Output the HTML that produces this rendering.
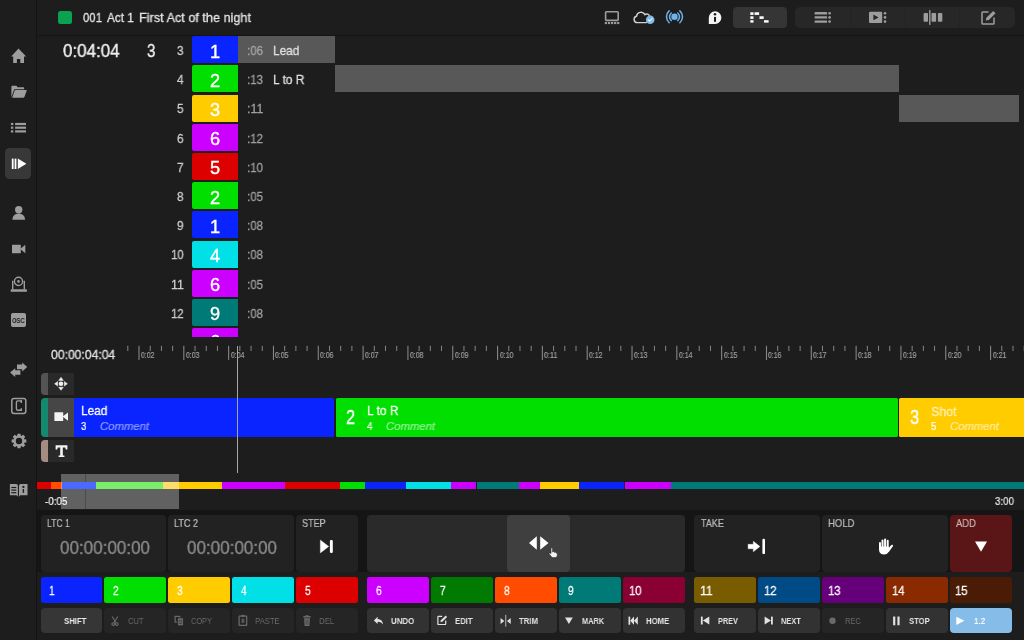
<!DOCTYPE html>
<html><head><meta charset="utf-8"><style>
html,body{margin:0;padding:0;}
body{width:1024px;height:640px;overflow:hidden;background:#1d1d1d;position:relative;font-family:"Liberation Sans",sans-serif;}
body div, body svg{position:absolute;}
body div div, body div svg{position:absolute;}
.t{white-space:nowrap;will-change:transform;}
svg{overflow:visible}
</style></head><body>
<div style="left:36.00px;top:0.00px;width:1.00px;height:640.00px;background:#141414;"></div>
<div style="left:37.00px;top:35.00px;width:987.00px;height:1.00px;background:#141414;"></div>
<div style="left:58.00px;top:11.00px;width:13.50px;height:12.50px;background:#0aa250;border-radius:2.5px;"></div>
<div class="t" style="left:82.70px;top:10px;font-size:13.23px;line-height:15px;color:#e6e6e6;-webkit-text-stroke:0.28px #e6e6e6;transform:scaleX(0.8612);transform-origin:0 0;">001</div>
<div class="t" style="left:107.10px;top:10px;font-size:13.23px;line-height:15px;color:#e6e6e6;-webkit-text-stroke:0.28px #e6e6e6;transform:scaleX(0.8891);transform-origin:0 0;">Act 1</div>
<div class="t" style="left:139.30px;top:10px;font-size:13.23px;line-height:15px;color:#e6e6e6;-webkit-text-stroke:0.28px #e6e6e6;transform:scaleX(0.9582);transform-origin:0 0;">First Act of the night</div>
<svg style="left:603.00px;top:9.00px;width:18.00px;height:17.00px" viewBox="0 0 18 17"><rect x="2.6" y="2.8" width="12.6" height="8.6" rx="0.8" fill="none" stroke="#9d9d9d" stroke-width="1.6"/><g fill="#9d9d9d"><rect x="1.8" y="13" width="2.2" height="2.1"/><rect x="4.9" y="13" width="2.2" height="2.1"/><rect x="8" y="13" width="2.2" height="2.1"/><rect x="11.1" y="13" width="2.2" height="2.1"/><rect x="14.1" y="13" width="2.2" height="2.1"/></g></svg>
<svg style="left:632.00px;top:9.00px;width:24.00px;height:17.00px" viewBox="0 0 24 17"><path d="M14.5 13.6 H5.4 A3.2 3.2 0 0 1 4.5 7.3 A4.5 4.5 0 0 1 12.9 5.6 A2.9 2.9 0 0 1 17.6 7.6" fill="none" stroke="#d2d2d2" stroke-width="1.4" stroke-linecap="round"/><circle cx="18.2" cy="10.7" r="4.3" fill="#7fbaea"/><path d="M16.3 10.9 L17.6 12.2 L20.1 9.5" fill="none" stroke="#f4f8fc" stroke-width="1.1" stroke-linecap="round" stroke-linejoin="round"/></svg>
<svg style="left:664.00px;top:8.00px;width:21.00px;height:18.00px" viewBox="0 0 21 18"><circle cx="10.5" cy="8.8" r="3.2" fill="#6fb3e8"/><path d="M7.29 4.97 A5 5 0 0 0 7.29 12.63 M13.71 4.97 A5 5 0 0 1 13.71 12.63 M5.15 2.85 A8 8 0 0 0 5.15 14.75 M15.85 2.85 A8 8 0 0 1 15.85 14.75" fill="none" stroke="#6fb3e8" stroke-width="1.5" stroke-linecap="round"/></svg>
<svg style="left:707.00px;top:10.00px;width:16.00px;height:16.00px" viewBox="0 0 16 16"><path d="M1.8 13.9 V7.6 A6.3 6.3 0 1 1 8.1 13.9 Z" fill="#f4f4f4"/><circle cx="8.0" cy="4.3" r="1.25" fill="#1d1d1d"/><rect x="7.0" y="6.9" width="2.05" height="4.9" fill="#1d1d1d"/></svg>
<div style="left:732.70px;top:6.90px;width:53.90px;height:20.90px;background:#353535;border-radius:4px;"></div>
<svg style="left:749.00px;top:11.00px;width:21.00px;height:13.00px" viewBox="0 0 21 13"><g fill="#fff"><rect x="1.3" y="1.3" width="3.2" height="2.6"/><rect x="1.3" y="5.3" width="3.2" height="2.6"/><rect x="1.3" y="9.2" width="3.2" height="2.4"/><rect x="5.5" y="1.3" width="4.6" height="2.6"/><rect x="10.5" y="5.3" width="4.2" height="2.6"/><rect x="15" y="9.2" width="4.6" height="2.4"/></g></svg>
<div style="left:795.00px;top:6.70px;width:220.00px;height:21.20px;background:#272727;border-radius:5px;"></div>
<div style="left:850.10px;top:6.70px;width:1.00px;height:21.20px;background:#232323;"></div>
<div style="left:904.90px;top:6.70px;width:1.00px;height:21.20px;background:#232323;"></div>
<div style="left:958.60px;top:6.70px;width:1.00px;height:21.20px;background:#232323;"></div>
<svg style="left:813.00px;top:10.00px;width:20.00px;height:15.00px" viewBox="0 0 20 15"><g fill="#9d9d9d"><rect x="1.6" y="2.1" width="12.5" height="2.4" rx="0.6"/><rect x="1.6" y="6.2" width="12.5" height="2.4" rx="0.6"/><rect x="1.6" y="10.4" width="12.5" height="2.4" rx="0.6"/><circle cx="16.6" cy="3.3" r="1.3"/><circle cx="16.6" cy="7.4" r="1.3"/><circle cx="16.6" cy="11.6" r="1.3"/></g></svg>
<svg style="left:868.00px;top:10.00px;width:20.00px;height:15.00px" viewBox="0 0 20 15"><rect x="1" y="1.8" width="13.2" height="11.2" rx="1.2" fill="#9d9d9d"/><path d="M5.4 4.6 L10.6 7.4 L5.4 10.2 Z" fill="#272727"/><g fill="#9d9d9d"><circle cx="17" cy="3.3" r="1.3"/><circle cx="17" cy="7.4" r="1.3"/><circle cx="17" cy="11.6" r="1.3"/></g></svg>
<svg style="left:922.00px;top:9.00px;width:22.00px;height:17.00px" viewBox="0 0 22 17"><g fill="#9d9d9d"><rect x="1.6" y="4.1" width="4.4" height="8.7" rx="0.8"/><rect x="9.5" y="4.1" width="4.6" height="8.7" rx="0.8"/><rect x="15.9" y="4.1" width="4.4" height="8.7" rx="0.8"/><rect x="7.1" y="1.1" width="1.4" height="14.8"/></g></svg>
<svg style="left:980.00px;top:9.00px;width:17.00px;height:17.00px" viewBox="0 0 17 17"><path d="M8.5 2.9 H2.8 Q2 2.9 2 3.7 V14.2 Q2 15 2.8 15 H13.2 Q14 15 14 14.2 V8.6" fill="none" stroke="#9d9d9d" stroke-width="1.5"/><path d="M5.8 11.6 L6.4 8.7 L13.2 1.9 L15.6 4.3 L8.8 11.1 Z" fill="#9d9d9d"/></svg>
<svg style="left:10.00px;top:47.00px;width:18.00px;height:18.00px" viewBox="0 0 18 18"><path d="M8.5 1.6 L16.2 9.4 L14 9.4 L14 16 L10.3 16 L10.3 12 L6.9 12 L6.9 16 L3.2 16 L3.2 9.4 L1.2 9.4 Z" fill="#9d9d9d"/></svg>
<svg style="left:10.00px;top:84.00px;width:18.00px;height:15.00px" viewBox="0 0 18 15"><path d="M1.4 13.6 V2.6 Q1.4 1.8 2.2 1.8 H6.4 L7.6 3.2 H13.4 Q14.2 3.2 14.2 4 V5.2 H5 Q4.2 5.2 3.9 6 Z" fill="#9d9d9d"/><path d="M2.2 13.8 L4.6 6.6 Q4.9 5.9 5.7 5.9 H16.2 Q17 5.9 16.7 6.7 L14.4 13.1 Q14.1 13.8 13.3 13.8 Z" fill="#9d9d9d"/></svg>
<svg style="left:9.00px;top:121.00px;width:19.00px;height:13.00px" viewBox="0 0 19 13"><g fill="#9d9d9d"><rect x="1.9" y="1.9" width="2.4" height="2.2"/><rect x="1.9" y="5.6" width="2.4" height="2.2"/><rect x="1.9" y="9.3" width="2.4" height="2.2"/><rect x="6.1" y="1.9" width="10.9" height="2.2"/><rect x="6.1" y="5.6" width="10.9" height="2.2"/><rect x="6.1" y="9.3" width="10.9" height="2.2"/></g></svg>
<div style="left:4.90px;top:148.00px;width:26.60px;height:31.40px;background:#383838;border-radius:4.5px;"></div>
<svg style="left:10.00px;top:157.00px;width:18.00px;height:14.00px" viewBox="0 0 18 14"><g fill="#fff"><rect x="1.8" y="1.6" width="1.8" height="10.4"/><rect x="4.6" y="1.6" width="1.8" height="10.4"/><path d="M7.8 1.6 L16.4 6.8 L7.8 12 Z"/></g></svg>
<svg style="left:11.00px;top:204.00px;width:16.00px;height:17.00px" viewBox="0 0 16 17"><circle cx="7.7" cy="5.8" r="3.7" fill="#9d9d9d"/><path d="M1.4 15.7 Q1.6 9.8 7.7 9.6 Q13.8 9.8 14.1 15.7 Z" fill="#9d9d9d"/></svg>
<svg style="left:11.00px;top:243.00px;width:16.00px;height:12.00px" viewBox="0 0 16 12"><rect x="1" y="1.8" width="8.8" height="8.4" rx="0.5" fill="#9d9d9d"/><path d="M9.2 5.9 L14.3 1.8 V10.2 Z" fill="#9d9d9d"/></svg>
<svg style="left:10.00px;top:275.00px;width:18.00px;height:18.00px" viewBox="0 0 18 18"><circle cx="8.5" cy="6.4" r="4.1" fill="none" stroke="#9d9d9d" stroke-width="1.4"/><circle cx="8.5" cy="6.4" r="1.3" fill="#9d9d9d"/><path d="M2.7 14.3 V5.8 M14.3 14.3 V5.8" stroke="#9d9d9d" stroke-width="1.4"/><rect x="0.7" y="14.3" width="16.2" height="2.5" rx="0.6" fill="#9d9d9d"/></svg>
<div style="left:11.40px;top:313.10px;width:14.50px;height:14.30px;background:#9d9d9d;border-radius:2px;"></div>
<div class="t" style="left:11.95px;top:316px;font-size:7.56px;line-height:9px;color:#1d1d1d;font-weight:700;transform:scaleX(0.7693);transform-origin:0 0;">OSC</div>
<svg style="left:9.00px;top:361.00px;width:20.00px;height:17.00px" viewBox="0 0 20 17"><g fill="#9d9d9d"><path d="M8 3.6 H13.2 V1.6 L18.2 6 L13.2 10.4 V8.2 H8 Z"/><path d="M11.4 9.2 H6.2 V7.2 L1.1 11.6 L6.2 16 V13.8 H11.4 Z"/></g></svg>
<svg style="left:10.00px;top:396.00px;width:18.00px;height:19.00px" viewBox="0 0 18 19"><rect x="1.8" y="2.4" width="14" height="15" rx="2.2" fill="none" stroke="#9d9d9d" stroke-width="1.5"/><path d="M11.3 5.9 V4.9 H7.9 Q6.4 4.9 6.4 6.5 V12.7 Q6.4 14.3 7.9 14.3 H11.3 V13.3" fill="none" stroke="#9d9d9d" stroke-width="1.4"/><path d="M11.3 4.3 V6.9 M11.3 12.3 V14.9" stroke="#9d9d9d" stroke-width="1.5"/></svg>
<svg style="left:9.50px;top:432.25px;width:18.00px;height:18.00px" viewBox="0 0 18 18"><path d="M16.35 7.51 L16.35 10.49 L14.19 10.83 L13.96 11.37 L15.25 13.14 L13.14 15.25 L11.37 13.96 L10.83 14.19 L10.49 16.35 L7.51 16.35 L7.17 14.19 L6.63 13.96 L4.86 15.25 L2.75 13.14 L4.04 11.37 L3.81 10.83 L1.65 10.49 L1.65 7.51 L3.81 7.17 L4.04 6.63 L2.75 4.86 L4.86 2.75 L6.63 4.04 L7.17 3.81 L7.51 1.65 L10.49 1.65 L10.83 3.81 L11.37 4.04 L13.14 2.75 L15.25 4.86 L13.96 6.63 L14.19 7.17 Z M 5.80 9.00 a3.2 3.2 0 1 0 6.4 0 a3.2 3.2 0 1 0 -6.4 0 Z" fill="#9d9d9d" fill-rule="evenodd"/></svg>
<svg style="left:9.00px;top:483.00px;width:20.00px;height:16.00px" viewBox="0 0 20 16"><path d="M0.9 1 H7.1 Q8.9 1 8.9 2.8 V13.8 L7.6 12.3 H0.9 Z" fill="#9d9d9d"/><path d="M10 2.8 Q10 1 11.8 1 H18.5 V12.3 H11.3 L10 13.8 Z" fill="#9d9d9d"/><g fill="#1d1d1d"><rect x="2.3" y="3.9" width="5" height="1.2"/><rect x="2.3" y="6.5" width="5" height="1.2"/><rect x="2.3" y="9.1" width="5" height="1.2"/><circle cx="14.4" cy="3.9" r="1.15"/><rect x="13.7" y="6" width="1.4" height="3.8"/></g></svg>
<div class="t" style="left:63.40px;top:40px;font-size:18.90px;line-height:21px;color:#f0f0f0;-webkit-text-stroke:0.40px #f0f0f0;transform:scaleX(0.8979);transform-origin:0 0;">0:04:04</div>
<div class="t" style="left:147.20px;top:40px;font-size:18.90px;line-height:21px;color:#f0f0f0;-webkit-text-stroke:0.40px #f0f0f0;transform:scaleX(0.7996);transform-origin:0 0;">3</div>
<div style="left:37px;top:36px;width:987px;height:301.4px;overflow:hidden">
<div style="left:155.40px;top:0.25px;width:45.70px;height:27.00px;background:#0a24ff;border-radius:2px 0 0 2px;"></div>
<div style="left:201.10px;top:0.25px;width:97.00px;height:27.00px;background:#585858;"></div>
<div class="t" style="left:140.10px;top:8px;font-size:12.35px;line-height:14px;color:#cfcfcf;-webkit-text-stroke:0.26px #cfcfcf;transform:scaleX(0.9463);transform-origin:0 0;">3</div>
<div class="t" style="left:172.95px;top:6px;font-size:18.17px;line-height:20px;color:#ffffff;-webkit-text-stroke:0.38px #ffffff;">1</div>
<div class="t" style="left:209.90px;top:8px;font-size:12.35px;line-height:14px;color:#a6a6a6;-webkit-text-stroke:0.26px #a6a6a6;transform:scaleX(0.9317);transform-origin:0 0;">:06</div>
<div class="t" style="left:236.20px;top:7px;font-size:13.37px;line-height:15px;color:#e2e2e2;-webkit-text-stroke:0.28px #e2e2e2;transform:scaleX(0.8873);transform-origin:0 0;">Lead</div>
<div style="left:155.40px;top:29.45px;width:45.70px;height:27.00px;background:#00df00;border-radius:2px 0 0 2px;"></div>
<div style="left:298.10px;top:29.45px;width:563.60px;height:27.00px;background:#585858;"></div>
<div class="t" style="left:140.10px;top:37px;font-size:12.35px;line-height:14px;color:#cfcfcf;-webkit-text-stroke:0.26px #cfcfcf;transform:scaleX(0.9463);transform-origin:0 0;">4</div>
<div class="t" style="left:172.95px;top:35px;font-size:18.17px;line-height:20px;color:#ffffff;-webkit-text-stroke:0.38px #ffffff;">2</div>
<div class="t" style="left:209.90px;top:37px;font-size:12.35px;line-height:14px;color:#a0a0a0;-webkit-text-stroke:0.26px #a0a0a0;transform:scaleX(0.9317);transform-origin:0 0;">:13</div>
<div class="t" style="left:236.20px;top:36px;font-size:13.37px;line-height:15px;color:#e2e2e2;-webkit-text-stroke:0.28px #e2e2e2;transform:scaleX(0.8953);transform-origin:0 0;">L to R</div>
<div style="left:155.40px;top:58.65px;width:45.70px;height:27.00px;background:#ffcc00;border-radius:2px 0 0 2px;"></div>
<div style="left:861.70px;top:58.65px;width:120.50px;height:27.00px;background:#585858;"></div>
<div class="t" style="left:140.10px;top:66px;font-size:12.35px;line-height:14px;color:#cfcfcf;-webkit-text-stroke:0.26px #cfcfcf;transform:scaleX(0.9463);transform-origin:0 0;">5</div>
<div class="t" style="left:172.95px;top:64px;font-size:18.17px;line-height:20px;color:#ffffff;-webkit-text-stroke:0.38px #ffffff;">3</div>
<div class="t" style="left:209.90px;top:66px;font-size:12.35px;line-height:14px;color:#a0a0a0;-webkit-text-stroke:0.26px #a0a0a0;transform:scaleX(0.9841);transform-origin:0 0;">:11</div>
<div style="left:155.40px;top:87.85px;width:45.70px;height:27.00px;background:#cc00ff;border-radius:2px 0 0 2px;"></div>
<div class="t" style="left:140.10px;top:96px;font-size:12.35px;line-height:14px;color:#cfcfcf;-webkit-text-stroke:0.26px #cfcfcf;transform:scaleX(0.9463);transform-origin:0 0;">6</div>
<div class="t" style="left:172.95px;top:93px;font-size:18.17px;line-height:20px;color:#ffffff;-webkit-text-stroke:0.38px #ffffff;">6</div>
<div class="t" style="left:209.90px;top:96px;font-size:12.35px;line-height:14px;color:#a0a0a0;-webkit-text-stroke:0.26px #a0a0a0;transform:scaleX(0.9317);transform-origin:0 0;">:12</div>
<div style="left:155.40px;top:117.05px;width:45.70px;height:27.00px;background:#dc0000;border-radius:2px 0 0 2px;"></div>
<div class="t" style="left:140.10px;top:125px;font-size:12.35px;line-height:14px;color:#cfcfcf;-webkit-text-stroke:0.26px #cfcfcf;transform:scaleX(0.9463);transform-origin:0 0;">7</div>
<div class="t" style="left:172.95px;top:122px;font-size:18.17px;line-height:20px;color:#ffffff;-webkit-text-stroke:0.38px #ffffff;">5</div>
<div class="t" style="left:209.90px;top:125px;font-size:12.35px;line-height:14px;color:#a0a0a0;-webkit-text-stroke:0.26px #a0a0a0;transform:scaleX(0.9317);transform-origin:0 0;">:10</div>
<div style="left:155.40px;top:146.25px;width:45.70px;height:27.00px;background:#00df00;border-radius:2px 0 0 2px;"></div>
<div class="t" style="left:140.10px;top:154px;font-size:12.35px;line-height:14px;color:#cfcfcf;-webkit-text-stroke:0.26px #cfcfcf;transform:scaleX(0.9463);transform-origin:0 0;">8</div>
<div class="t" style="left:172.95px;top:152px;font-size:18.17px;line-height:20px;color:#ffffff;-webkit-text-stroke:0.38px #ffffff;">2</div>
<div class="t" style="left:209.90px;top:154px;font-size:12.35px;line-height:14px;color:#a0a0a0;-webkit-text-stroke:0.26px #a0a0a0;transform:scaleX(0.9317);transform-origin:0 0;">:05</div>
<div style="left:155.40px;top:175.45px;width:45.70px;height:27.00px;background:#0a24ff;border-radius:2px 0 0 2px;"></div>
<div class="t" style="left:140.10px;top:183px;font-size:12.35px;line-height:14px;color:#cfcfcf;-webkit-text-stroke:0.26px #cfcfcf;transform:scaleX(0.9463);transform-origin:0 0;">9</div>
<div class="t" style="left:172.95px;top:181px;font-size:18.17px;line-height:20px;color:#ffffff;-webkit-text-stroke:0.38px #ffffff;">1</div>
<div class="t" style="left:209.90px;top:183px;font-size:12.35px;line-height:14px;color:#a0a0a0;-webkit-text-stroke:0.26px #a0a0a0;transform:scaleX(0.9317);transform-origin:0 0;">:08</div>
<div style="left:155.40px;top:204.65px;width:45.70px;height:27.00px;background:#00e0e6;border-radius:2px 0 0 2px;"></div>
<div class="t" style="left:133.80px;top:212px;font-size:12.35px;line-height:14px;color:#cfcfcf;-webkit-text-stroke:0.26px #cfcfcf;transform:scaleX(0.9317);transform-origin:0 0;">10</div>
<div class="t" style="left:172.95px;top:210px;font-size:18.17px;line-height:20px;color:#ffffff;-webkit-text-stroke:0.38px #ffffff;">4</div>
<div class="t" style="left:209.90px;top:212px;font-size:12.35px;line-height:14px;color:#a0a0a0;-webkit-text-stroke:0.26px #a0a0a0;transform:scaleX(0.9317);transform-origin:0 0;">:08</div>
<div style="left:155.40px;top:233.85px;width:45.70px;height:27.00px;background:#cc00ff;border-radius:2px 0 0 2px;"></div>
<div class="t" style="left:133.80px;top:242px;font-size:12.35px;line-height:14px;color:#cfcfcf;-webkit-text-stroke:0.26px #cfcfcf;">11</div>
<div class="t" style="left:172.95px;top:239px;font-size:18.17px;line-height:20px;color:#ffffff;-webkit-text-stroke:0.38px #ffffff;">6</div>
<div class="t" style="left:209.90px;top:242px;font-size:12.35px;line-height:14px;color:#a0a0a0;-webkit-text-stroke:0.26px #a0a0a0;transform:scaleX(0.9317);transform-origin:0 0;">:05</div>
<div style="left:155.40px;top:263.05px;width:45.70px;height:27.00px;background:#007a76;border-radius:2px 0 0 2px;"></div>
<div class="t" style="left:133.80px;top:271px;font-size:12.35px;line-height:14px;color:#cfcfcf;-webkit-text-stroke:0.26px #cfcfcf;transform:scaleX(0.9317);transform-origin:0 0;">12</div>
<div class="t" style="left:172.95px;top:268px;font-size:18.17px;line-height:20px;color:#ffffff;-webkit-text-stroke:0.38px #ffffff;">9</div>
<div class="t" style="left:209.90px;top:271px;font-size:12.35px;line-height:14px;color:#a0a0a0;-webkit-text-stroke:0.26px #a0a0a0;transform:scaleX(0.9317);transform-origin:0 0;">:08</div>
<div style="left:155.40px;top:292.25px;width:45.70px;height:27.00px;background:#cc00ff;border-radius:2px 0 0 2px;"></div>
<div class="t" style="left:133.80px;top:300px;font-size:12.35px;line-height:14px;color:#cfcfcf;-webkit-text-stroke:0.26px #cfcfcf;transform:scaleX(0.9317);transform-origin:0 0;">13</div>
<div class="t" style="left:172.95px;top:296px;font-size:18.17px;line-height:20px;color:#ffffff;-webkit-text-stroke:0.38px #ffffff;">6</div>
<div class="t" style="left:209.90px;top:300px;font-size:12.35px;line-height:14px;color:#a0a0a0;-webkit-text-stroke:0.26px #a0a0a0;transform:scaleX(0.9317);transform-origin:0 0;">:08</div>
</div>
<div class="t" style="left:50.90px;top:348px;font-size:12.50px;line-height:14px;color:#e6e6e6;-webkit-text-stroke:0.26px #e6e6e6;transform:scaleX(0.9722);transform-origin:0 0;">00:00:04:04</div>
<div class="t" style="left:141.00px;top:351px;font-size:8.14px;line-height:9px;color:#a2a2a2;-webkit-text-stroke:0.18px #a2a2a2;transform:scaleX(0.8460);transform-origin:0 0;">0:02</div>
<div class="t" style="left:185.82px;top:351px;font-size:8.14px;line-height:9px;color:#a2a2a2;-webkit-text-stroke:0.18px #a2a2a2;transform:scaleX(0.8460);transform-origin:0 0;">0:03</div>
<div class="t" style="left:230.64px;top:351px;font-size:8.14px;line-height:9px;color:#a2a2a2;-webkit-text-stroke:0.18px #a2a2a2;transform:scaleX(0.8460);transform-origin:0 0;">0:04</div>
<div class="t" style="left:275.46px;top:351px;font-size:8.14px;line-height:9px;color:#a2a2a2;-webkit-text-stroke:0.18px #a2a2a2;transform:scaleX(0.8460);transform-origin:0 0;">0:05</div>
<div class="t" style="left:320.28px;top:351px;font-size:8.14px;line-height:9px;color:#a2a2a2;-webkit-text-stroke:0.18px #a2a2a2;transform:scaleX(0.8460);transform-origin:0 0;">0:06</div>
<div class="t" style="left:365.10px;top:351px;font-size:8.14px;line-height:9px;color:#a2a2a2;-webkit-text-stroke:0.18px #a2a2a2;transform:scaleX(0.8460);transform-origin:0 0;">0:07</div>
<div class="t" style="left:409.92px;top:351px;font-size:8.14px;line-height:9px;color:#a2a2a2;-webkit-text-stroke:0.18px #a2a2a2;transform:scaleX(0.8460);transform-origin:0 0;">0:08</div>
<div class="t" style="left:454.74px;top:351px;font-size:8.14px;line-height:9px;color:#a2a2a2;-webkit-text-stroke:0.18px #a2a2a2;transform:scaleX(0.8460);transform-origin:0 0;">0:09</div>
<div class="t" style="left:499.56px;top:351px;font-size:8.14px;line-height:9px;color:#a2a2a2;-webkit-text-stroke:0.18px #a2a2a2;transform:scaleX(0.8460);transform-origin:0 0;">0:10</div>
<div class="t" style="left:544.38px;top:351px;font-size:8.14px;line-height:9px;color:#a2a2a2;-webkit-text-stroke:0.18px #a2a2a2;transform:scaleX(0.8794);transform-origin:0 0;">0:11</div>
<div class="t" style="left:589.20px;top:351px;font-size:8.14px;line-height:9px;color:#a2a2a2;-webkit-text-stroke:0.18px #a2a2a2;transform:scaleX(0.8460);transform-origin:0 0;">0:12</div>
<div class="t" style="left:634.02px;top:351px;font-size:8.14px;line-height:9px;color:#a2a2a2;-webkit-text-stroke:0.18px #a2a2a2;transform:scaleX(0.8460);transform-origin:0 0;">0:13</div>
<div class="t" style="left:678.84px;top:351px;font-size:8.14px;line-height:9px;color:#a2a2a2;-webkit-text-stroke:0.18px #a2a2a2;transform:scaleX(0.8460);transform-origin:0 0;">0:14</div>
<div class="t" style="left:723.66px;top:351px;font-size:8.14px;line-height:9px;color:#a2a2a2;-webkit-text-stroke:0.18px #a2a2a2;transform:scaleX(0.8460);transform-origin:0 0;">0:15</div>
<div class="t" style="left:768.48px;top:351px;font-size:8.14px;line-height:9px;color:#a2a2a2;-webkit-text-stroke:0.18px #a2a2a2;transform:scaleX(0.8460);transform-origin:0 0;">0:16</div>
<div class="t" style="left:813.30px;top:351px;font-size:8.14px;line-height:9px;color:#a2a2a2;-webkit-text-stroke:0.18px #a2a2a2;transform:scaleX(0.8460);transform-origin:0 0;">0:17</div>
<div class="t" style="left:858.12px;top:351px;font-size:8.14px;line-height:9px;color:#a2a2a2;-webkit-text-stroke:0.18px #a2a2a2;transform:scaleX(0.8460);transform-origin:0 0;">0:18</div>
<div class="t" style="left:902.94px;top:351px;font-size:8.14px;line-height:9px;color:#a2a2a2;-webkit-text-stroke:0.18px #a2a2a2;transform:scaleX(0.8460);transform-origin:0 0;">0:19</div>
<div class="t" style="left:947.76px;top:351px;font-size:8.14px;line-height:9px;color:#a2a2a2;-webkit-text-stroke:0.18px #a2a2a2;transform:scaleX(0.8460);transform-origin:0 0;">0:20</div>
<div class="t" style="left:992.58px;top:351px;font-size:8.14px;line-height:9px;color:#a2a2a2;-webkit-text-stroke:0.18px #a2a2a2;transform:scaleX(0.8460);transform-origin:0 0;">0:21</div>
<svg style="left:0;top:0;width:1024px;height:640px" viewBox="0 0 1024 640"><g fill="#868686"><rect x="127.30" y="345.8" width="1.0" height="5.2"/><rect x="138.45" y="345.8" width="1.1" height="14.1"/><rect x="149.71" y="345.8" width="1.0" height="5.2"/><rect x="160.91" y="345.8" width="1.0" height="5.2"/><rect x="172.12" y="345.8" width="1.0" height="5.2"/><rect x="183.27" y="345.8" width="1.1" height="14.1"/><rect x="194.53" y="345.8" width="1.0" height="5.2"/><rect x="205.73" y="345.8" width="1.0" height="5.2"/><rect x="216.94" y="345.8" width="1.0" height="5.2"/><rect x="228.09" y="345.8" width="1.1" height="14.1"/><rect x="239.34" y="345.8" width="1.0" height="5.2"/><rect x="250.55" y="345.8" width="1.0" height="5.2"/><rect x="261.75" y="345.8" width="1.0" height="5.2"/><rect x="272.91" y="345.8" width="1.1" height="14.1"/><rect x="284.17" y="345.8" width="1.0" height="5.2"/><rect x="295.37" y="345.8" width="1.0" height="5.2"/><rect x="306.58" y="345.8" width="1.0" height="5.2"/><rect x="317.73" y="345.8" width="1.1" height="14.1"/><rect x="328.98" y="345.8" width="1.0" height="5.2"/><rect x="340.19" y="345.8" width="1.0" height="5.2"/><rect x="351.39" y="345.8" width="1.0" height="5.2"/><rect x="362.55" y="345.8" width="1.1" height="14.1"/><rect x="373.81" y="345.8" width="1.0" height="5.2"/><rect x="385.01" y="345.8" width="1.0" height="5.2"/><rect x="396.22" y="345.8" width="1.0" height="5.2"/><rect x="407.37" y="345.8" width="1.1" height="14.1"/><rect x="418.62" y="345.8" width="1.0" height="5.2"/><rect x="429.83" y="345.8" width="1.0" height="5.2"/><rect x="441.04" y="345.8" width="1.0" height="5.2"/><rect x="452.19" y="345.8" width="1.1" height="14.1"/><rect x="463.44" y="345.8" width="1.0" height="5.2"/><rect x="474.65" y="345.8" width="1.0" height="5.2"/><rect x="485.86" y="345.8" width="1.0" height="5.2"/><rect x="497.01" y="345.8" width="1.1" height="14.1"/><rect x="508.26" y="345.8" width="1.0" height="5.2"/><rect x="519.47" y="345.8" width="1.0" height="5.2"/><rect x="530.67" y="345.8" width="1.0" height="5.2"/><rect x="541.83" y="345.8" width="1.1" height="14.1"/><rect x="553.09" y="345.8" width="1.0" height="5.2"/><rect x="564.29" y="345.8" width="1.0" height="5.2"/><rect x="575.50" y="345.8" width="1.0" height="5.2"/><rect x="586.65" y="345.8" width="1.1" height="14.1"/><rect x="597.91" y="345.8" width="1.0" height="5.2"/><rect x="609.11" y="345.8" width="1.0" height="5.2"/><rect x="620.32" y="345.8" width="1.0" height="5.2"/><rect x="631.47" y="345.8" width="1.1" height="14.1"/><rect x="642.73" y="345.8" width="1.0" height="5.2"/><rect x="653.93" y="345.8" width="1.0" height="5.2"/><rect x="665.13" y="345.8" width="1.0" height="5.2"/><rect x="676.29" y="345.8" width="1.1" height="14.1"/><rect x="687.55" y="345.8" width="1.0" height="5.2"/><rect x="698.75" y="345.8" width="1.0" height="5.2"/><rect x="709.96" y="345.8" width="1.0" height="5.2"/><rect x="721.11" y="345.8" width="1.1" height="14.1"/><rect x="732.37" y="345.8" width="1.0" height="5.2"/><rect x="743.57" y="345.8" width="1.0" height="5.2"/><rect x="754.77" y="345.8" width="1.0" height="5.2"/><rect x="765.93" y="345.8" width="1.1" height="14.1"/><rect x="777.19" y="345.8" width="1.0" height="5.2"/><rect x="788.39" y="345.8" width="1.0" height="5.2"/><rect x="799.60" y="345.8" width="1.0" height="5.2"/><rect x="810.75" y="345.8" width="1.1" height="14.1"/><rect x="822.00" y="345.8" width="1.0" height="5.2"/><rect x="833.21" y="345.8" width="1.0" height="5.2"/><rect x="844.41" y="345.8" width="1.0" height="5.2"/><rect x="855.57" y="345.8" width="1.1" height="14.1"/><rect x="866.83" y="345.8" width="1.0" height="5.2"/><rect x="878.03" y="345.8" width="1.0" height="5.2"/><rect x="889.24" y="345.8" width="1.0" height="5.2"/><rect x="900.39" y="345.8" width="1.1" height="14.1"/><rect x="911.65" y="345.8" width="1.0" height="5.2"/><rect x="922.85" y="345.8" width="1.0" height="5.2"/><rect x="934.06" y="345.8" width="1.0" height="5.2"/><rect x="945.21" y="345.8" width="1.1" height="14.1"/><rect x="956.47" y="345.8" width="1.0" height="5.2"/><rect x="967.67" y="345.8" width="1.0" height="5.2"/><rect x="978.88" y="345.8" width="1.0" height="5.2"/><rect x="990.03" y="345.8" width="1.1" height="14.1"/><rect x="1001.29" y="345.8" width="1.0" height="5.2"/><rect x="1012.49" y="345.8" width="1.0" height="5.2"/><rect x="1023.69" y="345.8" width="1.0" height="5.2"/></g></svg>
<div style="left:40.80px;top:372.60px;width:33.10px;height:22.50px;background:#545454;border-radius:4px 0 0 4px;"></div>
<div style="left:47.60px;top:372.60px;width:26.30px;height:22.50px;background:#292929;"></div>
<svg style="left:52.00px;top:375.00px;width:17.00px;height:17.00px" viewBox="0 0 17 17"><g fill="#f0f0f0"><circle cx="9" cy="8.8" r="2.3"/><path d="M9 2.3 L11.3 5.4 H6.7 Z M9 15.3 L11.3 12.2 H6.7 Z M2.6 8.8 L5.7 6.5 V11.1 Z M15.4 8.8 L12.3 6.5 V11.1 Z" stroke="#f0f0f0" stroke-width="0.5" stroke-linejoin="round"/></g></svg>
<div style="left:40.80px;top:397.90px;width:33.10px;height:39.30px;background:#14896f;border-radius:4px 0 0 4px;"></div>
<div style="left:47.60px;top:397.90px;width:26.30px;height:39.30px;background:#464646;"></div>
<svg style="left:53.00px;top:410.00px;width:17.00px;height:14.00px" viewBox="0 0 17 14"><rect x="1.4" y="2.2" width="8.8" height="8.8" rx="0.6" fill="#f4f4f4"/><path d="M9.6 6.6 L15 2.4 V10.8 Z" fill="#f4f4f4"/></svg>
<div style="left:40.80px;top:440.00px;width:33.10px;height:22.20px;background:#a58c80;border-radius:4px 0 0 4px;"></div>
<div style="left:47.60px;top:440.00px;width:26.30px;height:22.20px;background:#292929;"></div>
<svg style="left:53.50px;top:443.00px;width:15.00px;height:16.00px" viewBox="0 0 15 16"><path d="M1.6 2.2 H13.4 V6.4 H11.8 L11.2 4.4 H8.8 V12.4 L10.4 12.6 V14 H4.6 V12.6 L6.2 12.4 V4.4 H3.8 L3.2 6.4 H1.6 Z" fill="#f4f4f4"/></svg>
<div style="left:73.90px;top:397.90px;width:260.60px;height:39.30px;background:#0a24ff;border-radius:0 1.5px 1.5px 0;"></div>
<div style="left:335.90px;top:397.90px;width:562.40px;height:39.30px;background:#00df00;border-radius:1.5px;"></div>
<div style="left:899.40px;top:397.90px;width:130.60px;height:39.30px;background:#ffcc00;border-radius:1.5px;"></div>
<div class="t" style="left:81.10px;top:403px;font-size:13.52px;line-height:15px;color:#ffffff;-webkit-text-stroke:0.28px #ffffff;transform:scaleX(0.8778);transform-origin:0 0;">Lead</div>
<div class="t" style="left:81.10px;top:420px;font-size:11.48px;line-height:12px;color:#ffffff;-webkit-text-stroke:0.24px #ffffff;transform:scaleX(0.8458);transform-origin:0 0;">3</div>
<div class="t" style="left:100.10px;top:420px;font-size:11.48px;line-height:12px;color:rgba(255,255,255,0.45);-webkit-text-stroke:0.24px rgba(255,255,255,0.45);font-style:italic;transform:scaleX(0.9865);transform-origin:0 0;">Comment</div>
<div class="t" style="left:346.40px;top:406px;font-size:19.77px;line-height:22px;color:#ffffff;-webkit-text-stroke:0.42px #ffffff;transform:scaleX(0.8280);transform-origin:0 0;">2</div>
<div class="t" style="left:367.30px;top:403px;font-size:13.08px;line-height:15px;color:#ffffff;-webkit-text-stroke:0.27px #ffffff;transform:scaleX(0.9152);transform-origin:0 0;">L to R</div>
<div class="t" style="left:367.30px;top:420px;font-size:11.48px;line-height:12px;color:rgba(255,255,255,0.9);-webkit-text-stroke:0.24px rgba(255,255,255,0.9);transform:scaleX(0.8772);transform-origin:0 0;">4</div>
<div class="t" style="left:386.30px;top:420px;font-size:11.48px;line-height:12px;color:rgba(255,255,255,0.5);-webkit-text-stroke:0.24px rgba(255,255,255,0.5);font-style:italic;transform:scaleX(0.9865);transform-origin:0 0;">Comment</div>
<div class="t" style="left:910.30px;top:406px;font-size:19.77px;line-height:22px;color:#ffffff;-webkit-text-stroke:0.42px #ffffff;transform:scaleX(0.8280);transform-origin:0 0;">3</div>
<div class="t" style="left:930.80px;top:404px;font-size:13.37px;line-height:15px;color:rgba(255,255,255,0.62);-webkit-text-stroke:0.28px rgba(255,255,255,0.62);transform:scaleX(0.9307);transform-origin:0 0;">Shot</div>
<div class="t" style="left:930.80px;top:420px;font-size:11.48px;line-height:12px;color:#ffffff;-webkit-text-stroke:0.24px #ffffff;transform:scaleX(0.8302);transform-origin:0 0;">5</div>
<div class="t" style="left:949.60px;top:420px;font-size:11.48px;line-height:12px;color:rgba(255,255,255,0.55);-webkit-text-stroke:0.24px rgba(255,255,255,0.55);font-style:italic;transform:scaleX(0.9825);transform-origin:0 0;">Comment</div>
<div style="left:236.90px;top:345.80px;width:1.30px;height:127.70px;background:#a6a6a6;"></div>
<div style="left:60.90px;top:473.80px;width:118.10px;height:35.70px;background:rgba(255,255,255,0.30);"></div>
<div style="left:84.60px;top:473.80px;width:1.00px;height:35.70px;background:rgba(0,0,0,0.22);"></div>
<div style="left:37.00px;top:482.40px;width:13.60px;height:7.00px;background:#dc0000;"></div>
<div style="left:50.60px;top:482.40px;width:10.30px;height:7.00px;background:#ff4c00;"></div>
<div style="left:60.90px;top:482.40px;width:0.90px;height:7.00px;background:#ff8a5a;"></div>
<div style="left:61.80px;top:482.40px;width:34.40px;height:7.00px;background:#4a6aff;"></div>
<div style="left:96.20px;top:482.40px;width:67.20px;height:7.00px;background:#7aee6a;"></div>
<div style="left:179.00px;top:482.40px;width:43.00px;height:7.00px;background:#ffcc00;"></div>
<div style="left:163.40px;top:482.40px;width:15.60px;height:7.00px;background:#ffdd6a;"></div>
<div style="left:222.00px;top:482.40px;width:63.00px;height:7.00px;background:#cc00ff;"></div>
<div style="left:285.00px;top:482.40px;width:55.00px;height:7.00px;background:#dc0000;"></div>
<div style="left:340.00px;top:482.40px;width:25.40px;height:7.00px;background:#00df00;"></div>
<div style="left:365.40px;top:482.40px;width:40.80px;height:7.00px;background:#0a24ff;"></div>
<div style="left:406.20px;top:482.40px;width:44.40px;height:7.00px;background:#00e0e6;"></div>
<div style="left:450.60px;top:482.40px;width:25.90px;height:7.00px;background:#cc00ff;"></div>
<div style="left:476.50px;top:482.40px;width:42.50px;height:7.00px;background:#007a76;"></div>
<div style="left:519.00px;top:482.40px;width:20.70px;height:7.00px;background:#cc00ff;"></div>
<div style="left:539.70px;top:482.40px;width:39.10px;height:7.00px;background:#ffcc00;"></div>
<div style="left:578.80px;top:482.40px;width:45.70px;height:7.00px;background:#0a24ff;"></div>
<div style="left:624.50px;top:482.40px;width:46.80px;height:7.00px;background:#cc00ff;"></div>
<div style="left:671.30px;top:482.40px;width:352.70px;height:7.00px;background:#007a76;"></div>
<div class="t" style="left:44.70px;top:495px;font-size:11.19px;line-height:12px;color:#f4f4f4;-webkit-text-stroke:0.24px #f4f4f4;transform:scaleX(0.8782);transform-origin:0 0;">-0:05</div>
<div class="t" style="left:995.40px;top:495px;font-size:11.19px;line-height:12px;color:#e8e8e8;-webkit-text-stroke:0.24px #e8e8e8;transform:scaleX(0.8724);transform-origin:0 0;">3:00</div>
<div style="left:37.00px;top:509.80px;width:987.00px;height:62.60px;background:#151515;"></div>
<div style="left:40.60px;top:514.80px;width:125.40px;height:57.20px;background:#222222;border-radius:4px;"></div>
<div class="t" style="left:46.80px;top:517px;font-size:11.48px;line-height:12px;color:#bdbdbd;-webkit-text-stroke:0.24px #bdbdbd;transform:scaleX(0.7529);transform-origin:0 0;">LTC 1</div>
<div class="t" style="left:59.50px;top:537px;font-size:18.75px;line-height:21px;color:#8a8a8a;-webkit-text-stroke:0.39px #8a8a8a;transform:scaleX(0.9086);transform-origin:0 0;">00:00:00:00</div>
<div style="left:168.10px;top:514.80px;width:125.90px;height:57.20px;background:#222222;border-radius:4px;"></div>
<div class="t" style="left:174.10px;top:517px;font-size:11.48px;line-height:12px;color:#bdbdbd;-webkit-text-stroke:0.24px #bdbdbd;transform:scaleX(0.7890);transform-origin:0 0;">LTC 2</div>
<div class="t" style="left:187.25px;top:537px;font-size:18.75px;line-height:21px;color:#8a8a8a;-webkit-text-stroke:0.39px #8a8a8a;transform:scaleX(0.9086);transform-origin:0 0;">00:00:00:00</div>
<div style="left:296.00px;top:514.80px;width:61.90px;height:57.20px;background:#222222;border-radius:4px;"></div>
<div class="t" style="left:302.20px;top:517px;font-size:11.48px;line-height:12px;color:#bdbdbd;-webkit-text-stroke:0.24px #bdbdbd;transform:scaleX(0.7869);transform-origin:0 0;">STEP</div>
<svg style="left:318.00px;top:538.00px;width:18.00px;height:17.00px" viewBox="0 0 18 17"><path d="M2.3 1.9 L10.8 8.45 L2.3 15 Z" fill="#fff" stroke="#fff" stroke-width="0.3" stroke-linejoin="round"/><rect x="11.9" y="1.9" width="2.9" height="13.1" rx="1.2" fill="#fff"/></svg>
<div style="left:367.40px;top:514.80px;width:317.30px;height:57.20px;background:#2a2a2a;border-radius:4px;"></div>
<div style="left:507.00px;top:514.80px;width:63.00px;height:57.10px;background:#3f3f3f;border-radius:4px;"></div>
<svg style="left:527.00px;top:534.00px;width:24.00px;height:18.00px" viewBox="0 0 24 18"><path d="M2 9 L9.8 2.2 V15.8 Z M21.5 9 L13.2 2.2 V15.8 Z" fill="#fff"/></svg>
<svg style="left:548.00px;top:547.00px;width:10.00px;height:11.00px" viewBox="0 0 10 11"><path d="M3 1.6 Q3 0.8 3.8 0.8 Q4.6 0.8 4.6 1.6 V5 Q5 4.4 5.8 4.6 Q6.4 4.8 6.5 5.4 Q7 4.9 7.7 5.2 Q8.2 5.5 8.3 6.1 Q9.2 6 9.3 6.9 V8.4 Q9.2 10.3 7.4 10.6 H5 Q4.2 10.6 3.6 9.9 L1.2 7 Q0.8 6.3 1.5 6 Q2.2 5.7 3 6.6 Z" fill="#f2f2f2" stroke="#2a2a2a" stroke-width="0.6"/></svg>
<div style="left:694.30px;top:514.80px;width:125.40px;height:57.20px;background:#222222;border-radius:4px;"></div>
<div class="t" style="left:701.20px;top:517px;font-size:11.48px;line-height:12px;color:#bdbdbd;-webkit-text-stroke:0.24px #bdbdbd;transform:scaleX(0.7858);transform-origin:0 0;">TAKE</div>
<svg style="left:747.30px;top:537.00px;width:19.00px;height:19.00px" viewBox="0 0 19 19"><path d="M1.1 7.3 H6.3 V4.25 L12.9 9.5 L6.3 14.8 V11.75 H1.1 Z" fill="#fff" stroke="#fff" stroke-width="0.4" stroke-linejoin="round"/><rect x="15.4" y="1.7" width="2.6" height="15.4" rx="1.2" fill="#fff"/></svg>
<div style="left:821.80px;top:514.80px;width:125.90px;height:57.20px;background:#222222;border-radius:4px;"></div>
<div class="t" style="left:828.40px;top:517px;font-size:11.48px;line-height:12px;color:#bdbdbd;-webkit-text-stroke:0.24px #bdbdbd;transform:scaleX(0.8276);transform-origin:0 0;">HOLD</div>
<svg style="left:877.00px;top:537.00px;width:18.00px;height:19.00px" viewBox="0 0 18 19"><g fill="#fff"><rect x="2.0" y="4.9" width="1.95" height="8" rx="0.97"/><rect x="4.55" y="2.6" width="1.95" height="9" rx="0.97"/><rect x="7.1" y="1.6" width="2.0" height="9" rx="1"/><rect x="9.75" y="2.8" width="1.95" height="9" rx="0.97"/><path d="M2 9.5 V12.8 Q2.2 17.6 7.2 17.6 Q10.2 17.5 12.2 14.6 L15.9 9.3 Q16.4 8.3 15.5 7.8 Q14.7 7.4 14.1 8.2 L11.7 11 V9.5 Z"/></g></svg>
<div style="left:949.70px;top:514.80px;width:61.90px;height:57.20px;background:#5a1616;border-radius:4px;"></div>
<div class="t" style="left:955.50px;top:517px;font-size:11.48px;line-height:12px;color:#c9b0b0;-webkit-text-stroke:0.24px #c9b0b0;transform:scaleX(0.8168);transform-origin:0 0;">ADD</div>
<svg style="left:974.00px;top:540.00px;width:14.00px;height:13.00px" viewBox="0 0 14 13"><path d="M1 1.5 H13 L7 11.8 Z" fill="#fff"/></svg>
<div style="left:40.60px;top:577.00px;width:61.90px;height:26.00px;background:#0a24ff;border-radius:2.5px;"></div>
<div class="t" style="left:49.30px;top:583px;font-size:12.79px;line-height:15px;color:#ffffff;-webkit-text-stroke:0.27px #ffffff;transform:scaleX(0.7874);transform-origin:0 0;">1</div>
<div style="left:104.10px;top:577.00px;width:61.90px;height:26.00px;background:#00df00;border-radius:2.5px;"></div>
<div class="t" style="left:112.80px;top:583px;font-size:12.79px;line-height:15px;color:#ffffff;-webkit-text-stroke:0.27px #ffffff;transform:scaleX(0.7874);transform-origin:0 0;">2</div>
<div style="left:168.10px;top:577.00px;width:61.90px;height:26.00px;background:#ffcc00;border-radius:2.5px;"></div>
<div class="t" style="left:176.80px;top:583px;font-size:12.79px;line-height:15px;color:#ffffff;-webkit-text-stroke:0.27px #ffffff;transform:scaleX(0.7874);transform-origin:0 0;">3</div>
<div style="left:232.10px;top:577.00px;width:61.90px;height:26.00px;background:#00e0e6;border-radius:2.5px;"></div>
<div class="t" style="left:240.80px;top:583px;font-size:12.79px;line-height:15px;color:#ffffff;-webkit-text-stroke:0.27px #ffffff;transform:scaleX(0.7874);transform-origin:0 0;">4</div>
<div style="left:296.00px;top:577.00px;width:61.90px;height:26.00px;background:#dc0000;border-radius:2.5px;"></div>
<div class="t" style="left:304.70px;top:583px;font-size:12.79px;line-height:15px;color:#ffffff;-webkit-text-stroke:0.27px #ffffff;transform:scaleX(0.7874);transform-origin:0 0;">5</div>
<div style="left:367.40px;top:577.00px;width:61.90px;height:26.00px;background:#cc00ff;border-radius:2.5px;"></div>
<div class="t" style="left:376.10px;top:583px;font-size:12.79px;line-height:15px;color:#ffffff;-webkit-text-stroke:0.27px #ffffff;transform:scaleX(0.7874);transform-origin:0 0;">6</div>
<div style="left:430.90px;top:577.00px;width:61.90px;height:26.00px;background:#007a00;border-radius:2.5px;"></div>
<div class="t" style="left:439.60px;top:583px;font-size:12.79px;line-height:15px;color:#ffffff;-webkit-text-stroke:0.27px #ffffff;transform:scaleX(0.7874);transform-origin:0 0;">7</div>
<div style="left:494.90px;top:577.00px;width:61.90px;height:26.00px;background:#ff4c00;border-radius:2.5px;"></div>
<div class="t" style="left:503.60px;top:583px;font-size:12.79px;line-height:15px;color:#ffffff;-webkit-text-stroke:0.27px #ffffff;transform:scaleX(0.7874);transform-origin:0 0;">8</div>
<div style="left:558.90px;top:577.00px;width:61.90px;height:26.00px;background:#007a76;border-radius:2.5px;"></div>
<div class="t" style="left:567.60px;top:583px;font-size:12.79px;line-height:15px;color:#ffffff;-webkit-text-stroke:0.27px #ffffff;transform:scaleX(0.7874);transform-origin:0 0;">9</div>
<div style="left:622.80px;top:577.00px;width:61.90px;height:26.00px;background:#8a0032;border-radius:2.5px;"></div>
<div class="t" style="left:628.50px;top:583px;font-size:12.79px;line-height:15px;color:#ffffff;-webkit-text-stroke:0.27px #ffffff;transform:scaleX(0.8859);transform-origin:0 0;">10</div>
<div style="left:694.30px;top:577.00px;width:61.90px;height:26.00px;background:#7a5c00;border-radius:2.5px;"></div>
<div class="t" style="left:700.00px;top:583px;font-size:12.79px;line-height:15px;color:#ffffff;-webkit-text-stroke:0.27px #ffffff;transform:scaleX(0.9490);transform-origin:0 0;">11</div>
<div style="left:757.80px;top:577.00px;width:61.90px;height:26.00px;background:#004a85;border-radius:2.5px;"></div>
<div class="t" style="left:763.50px;top:583px;font-size:12.79px;line-height:15px;color:#ffffff;-webkit-text-stroke:0.27px #ffffff;transform:scaleX(0.8859);transform-origin:0 0;">12</div>
<div style="left:821.80px;top:577.00px;width:61.90px;height:26.00px;background:#66007a;border-radius:2.5px;"></div>
<div class="t" style="left:827.50px;top:583px;font-size:12.79px;line-height:15px;color:#ffffff;-webkit-text-stroke:0.27px #ffffff;transform:scaleX(0.8859);transform-origin:0 0;">13</div>
<div style="left:885.80px;top:577.00px;width:61.90px;height:26.00px;background:#8a2a00;border-radius:2.5px;"></div>
<div class="t" style="left:891.50px;top:583px;font-size:12.79px;line-height:15px;color:#ffffff;-webkit-text-stroke:0.27px #ffffff;transform:scaleX(0.8859);transform-origin:0 0;">14</div>
<div style="left:949.70px;top:577.00px;width:61.90px;height:26.00px;background:#4a1c05;border-radius:2.5px;"></div>
<div class="t" style="left:955.40px;top:583px;font-size:12.79px;line-height:15px;color:#ffffff;-webkit-text-stroke:0.27px #ffffff;transform:scaleX(0.8859);transform-origin:0 0;">15</div>
<div style="left:40.60px;top:607.90px;width:61.90px;height:25.60px;background:#363636;border-radius:4px;"></div>
<div class="t" style="left:63.60px;top:615px;font-size:9.59px;line-height:11px;color:#ececec;font-weight:700;transform:scaleX(0.8082);transform-origin:0 0;">SHIFT</div>
<div style="left:104.10px;top:607.90px;width:61.90px;height:25.60px;background:#252525;border-radius:4px;"></div>
<svg style="left:109.60px;top:614.20px;width:14.00px;height:14.00px" viewBox="0 0 14 14"><g fill="none" stroke="#6a6a6a" stroke-width="1.15"><path d="M2.1 2.5 L6.2 8.7 M7.9 2.5 L3.8 8.7"/><circle cx="3.2" cy="10.1" r="1.35"/><circle cx="6.8" cy="10.1" r="1.35"/></g></svg>
<div class="t" style="left:127.50px;top:615px;font-size:9.59px;line-height:11px;color:#6a6a6a;transform:scaleX(0.7913);transform-origin:0 0;">CUT</div>
<div style="left:168.10px;top:607.90px;width:61.90px;height:25.60px;background:#252525;border-radius:4px;"></div>
<svg style="left:173.60px;top:614.20px;width:14.00px;height:14.00px" viewBox="0 0 14 14"><rect x="1.1" y="2.4" width="4.7" height="5.6" fill="none" stroke="#6a6a6a" stroke-width="1.2"/><rect x="3.6" y="3.9" width="5.7" height="7.9" fill="#6a6a6a" stroke="#222" stroke-width="0.7"/><path d="M4.8 6.3 H8.2 M4.8 7.9 H8.2 M4.8 9.5 H8.2" stroke="#3a3a3a" stroke-width="0.7"/></svg>
<div class="t" style="left:191.10px;top:615px;font-size:9.59px;line-height:11px;color:#6a6a6a;transform:scaleX(0.7724);transform-origin:0 0;">COPY</div>
<div style="left:232.10px;top:607.90px;width:61.90px;height:25.60px;background:#252525;border-radius:4px;"></div>
<svg style="left:237.60px;top:614.20px;width:14.00px;height:14.00px" viewBox="0 0 14 14"><rect x="1.1" y="2.1" width="7.6" height="9.3" rx="0.5" fill="none" stroke="#6a6a6a" stroke-width="1.25"/><rect x="3.3" y="0.9" width="3.2" height="1.8" fill="#6a6a6a"/><rect x="3.5" y="4.6" width="2.9" height="4.4" fill="#6a6a6a" opacity="0.7"/></svg>
<div class="t" style="left:255.10px;top:615px;font-size:9.59px;line-height:11px;color:#6a6a6a;transform:scaleX(0.8001);transform-origin:0 0;">PASTE</div>
<div style="left:296.00px;top:607.90px;width:61.90px;height:25.60px;background:#252525;border-radius:4px;"></div>
<svg style="left:301.50px;top:614.20px;width:14.00px;height:14.00px" viewBox="0 0 14 14"><rect x="1.3" y="1.9" width="7.4" height="1.7" rx="0.4" fill="#6a6a6a"/><rect x="3.6" y="1.2" width="2.8" height="1" fill="#6a6a6a"/><path d="M2.1 4.2 H7.9 L7.4 11.9 H2.6 Z" fill="#6a6a6a"/><path d="M4.1 5.6 V10.6 M5.9 5.6 V10.6" stroke="#2a2a2a" stroke-width="0.5"/></svg>
<div class="t" style="left:318.70px;top:615px;font-size:9.59px;line-height:11px;color:#6a6a6a;transform:scaleX(0.8146);transform-origin:0 0;">DEL</div>
<div style="left:367.40px;top:607.90px;width:61.90px;height:25.60px;background:#323232;border-radius:4px;"></div>
<svg style="left:372.90px;top:614.20px;width:14.00px;height:14.00px" viewBox="0 0 14 14"><path d="M4.6 2.8 L0.9 6.5 L4.6 10.1 V7.9 Q8.4 7.6 9.9 10.5 Q9.8 5.3 4.6 5 Z" fill="#e2e2e2"/></svg>
<div class="t" style="left:390.60px;top:615px;font-size:9.59px;line-height:11px;color:#e2e2e2;font-weight:700;transform:scaleX(0.8250);transform-origin:0 0;">UNDO</div>
<div style="left:430.90px;top:607.90px;width:61.90px;height:25.60px;background:#323232;border-radius:4px;"></div>
<svg style="left:436.40px;top:614.20px;width:14.00px;height:14.00px" viewBox="0 0 14 14"><path d="M6.2 2.3 H2.5 Q1.9 2.3 1.9 2.9 V9.9 Q1.9 10.5 2.5 10.5 H9.1 Q9.7 10.5 9.7 9.9 V6.4" fill="none" stroke="#e2e2e2" stroke-width="1.2"/><path d="M4.5 8.2 L4.9 6.3 L9.7 1.5 L11.1 2.9 L6.3 7.7 Z" fill="#e2e2e2"/></svg>
<div class="t" style="left:454.60px;top:615px;font-size:9.59px;line-height:11px;color:#e2e2e2;font-weight:700;transform:scaleX(0.8008);transform-origin:0 0;">EDIT</div>
<div style="left:494.90px;top:607.90px;width:61.90px;height:25.60px;background:#323232;border-radius:4px;"></div>
<svg style="left:500.40px;top:614.20px;width:14.00px;height:14.00px" viewBox="0 0 14 14"><path d="M0.6 3.9 L4.3 7 L0.6 10.1 Z M10.7 3.9 L7 7 L10.7 10.1 Z" fill="#e2e2e2"/><rect x="5.05" y="0.8" width="1.3" height="11.9" fill="#9a9a9a"/></svg>
<div class="t" style="left:518.60px;top:615px;font-size:9.59px;line-height:11px;color:#e2e2e2;font-weight:700;transform:scaleX(0.8104);transform-origin:0 0;">TRIM</div>
<div style="left:558.90px;top:607.90px;width:61.90px;height:25.60px;background:#323232;border-radius:4px;"></div>
<svg style="left:564.40px;top:614.20px;width:14.00px;height:14.00px" viewBox="0 0 14 14"><path d="M1 3.6 H8.8 L4.9 10.1 Z" fill="#e2e2e2"/></svg>
<div class="t" style="left:582.40px;top:615px;font-size:9.59px;line-height:11px;color:#e2e2e2;font-weight:700;transform:scaleX(0.7714);transform-origin:0 0;">MARK</div>
<div style="left:622.80px;top:607.90px;width:61.90px;height:25.60px;background:#323232;border-radius:4px;"></div>
<svg style="left:628.30px;top:614.20px;width:14.00px;height:14.00px" viewBox="0 0 14 14"><rect x="0.5" y="2.6" width="1.7" height="8.1" fill="#e2e2e2"/><path d="M6 2.6 V10.7 L2.2 6.65 Z M9.8 2.6 V10.7 L6 6.65 Z" fill="#e2e2e2"/></svg>
<div class="t" style="left:646.30px;top:615px;font-size:9.59px;line-height:11px;color:#e2e2e2;font-weight:700;transform:scaleX(0.8096);transform-origin:0 0;">HOME</div>
<div style="left:694.30px;top:607.90px;width:61.90px;height:25.60px;background:#323232;border-radius:4px;"></div>
<svg style="left:699.80px;top:614.20px;width:14.00px;height:14.00px" viewBox="0 0 14 14"><rect x="0.9" y="2.6" width="1.8" height="7.9" fill="#e2e2e2"/><path d="M9.3 2.6 V10.5 L2.9 6.55 Z" fill="#e2e2e2"/></svg>
<div class="t" style="left:717.80px;top:615px;font-size:9.59px;line-height:11px;color:#e2e2e2;font-weight:700;transform:scaleX(0.7618);transform-origin:0 0;">PREV</div>
<div style="left:757.80px;top:607.90px;width:61.90px;height:25.60px;background:#323232;border-radius:4px;"></div>
<svg style="left:763.30px;top:614.20px;width:14.00px;height:14.00px" viewBox="0 0 14 14"><path d="M1.6 2.6 V10.5 L8 6.55 Z" fill="#e2e2e2"/><rect x="8" y="2.6" width="1.8" height="7.9" fill="#e2e2e2"/></svg>
<div class="t" style="left:781.40px;top:615px;font-size:9.59px;line-height:11px;color:#e2e2e2;font-weight:700;transform:scaleX(0.7739);transform-origin:0 0;">NEXT</div>
<div style="left:821.80px;top:607.90px;width:61.90px;height:25.60px;background:#252525;border-radius:4px;"></div>
<svg style="left:827.30px;top:614.20px;width:14.00px;height:14.00px" viewBox="0 0 14 14"><circle cx="5.5" cy="6.8" r="3.2" fill="#6a6a6a"/></svg>
<div class="t" style="left:845.20px;top:615px;font-size:9.59px;line-height:11px;color:#6a6a6a;transform:scaleX(0.7802);transform-origin:0 0;">REC</div>
<div style="left:885.80px;top:607.90px;width:61.90px;height:25.60px;background:#323232;border-radius:4px;"></div>
<svg style="left:891.30px;top:614.20px;width:14.00px;height:14.00px" viewBox="0 0 14 14"><rect x="2.1" y="2.4" width="2.2" height="8.8" rx="0.3" fill="#e2e2e2"/><rect x="6.4" y="2.4" width="2.2" height="8.8" rx="0.3" fill="#e2e2e2"/></svg>
<div class="t" style="left:909.20px;top:615px;font-size:9.59px;line-height:11px;color:#e2e2e2;font-weight:700;transform:scaleX(0.8016);transform-origin:0 0;">STOP</div>
<div style="left:949.70px;top:607.90px;width:61.90px;height:25.60px;background:#86bde8;border-radius:4px;"></div>
<svg style="left:955.20px;top:614.20px;width:14.00px;height:14.00px" viewBox="0 0 14 14"><path d="M1.3 2.7 L9.3 6.8 L1.3 10.9 Z" fill="#ffffff"/></svg>
<div class="t" style="left:973.50px;top:615px;font-size:9.59px;line-height:11px;color:#ffffff;-webkit-text-stroke:0.20px #ffffff;transform:scaleX(0.8399);transform-origin:0 0;">1.2</div>
</body></html>
